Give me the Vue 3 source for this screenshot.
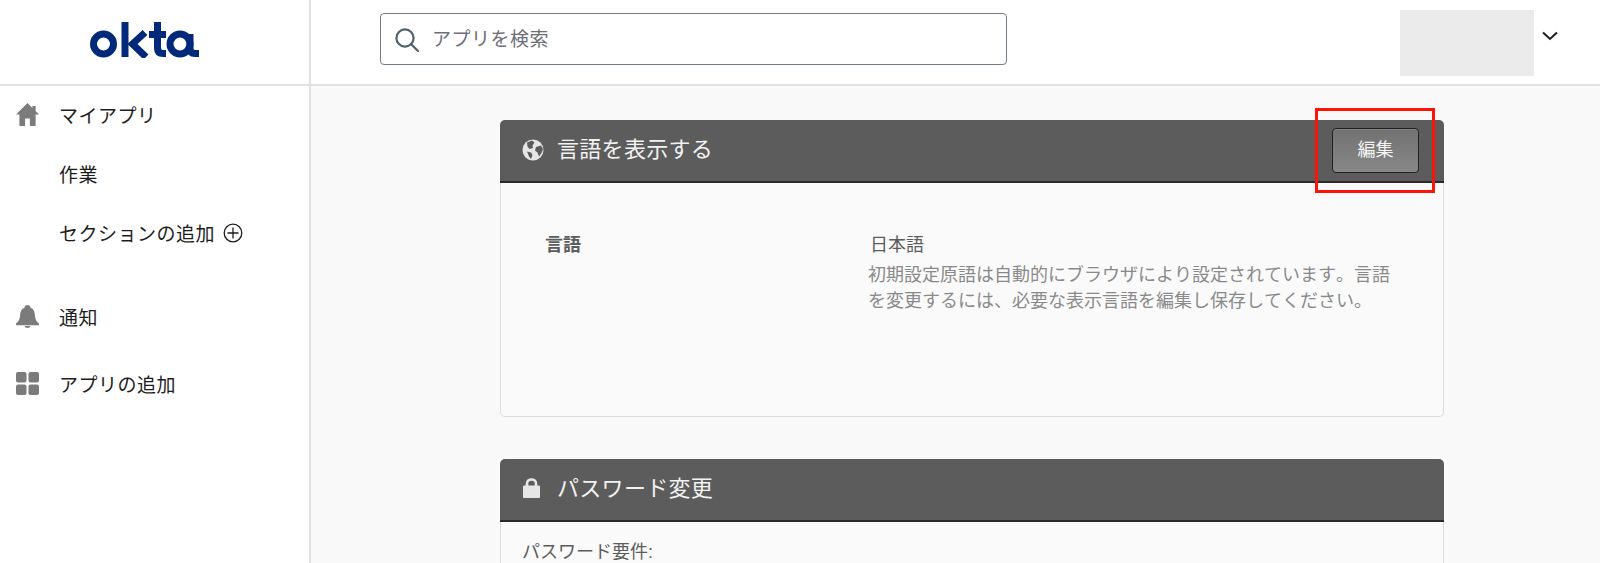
<template>
  <div class="page">
    <header class="topbar">
      <div class="brand">
        <svg class="logo" width="109" height="36" viewBox="0 0 109 36" fill="none" stroke="#00297a" stroke-width="7">
          <circle cx="13.5" cy="22" r="10" />
          <path d="M35 0V35" />
          <path d="M55 10.5L42.5 22L56 35" />
          <path d="M59 12.5H76M67.5 0V26Q67.5 31.5 73 31.5H76" />
          <circle cx="90" cy="22" r="10" />
          <path d="M100 12V26Q100 31.5 105 31.5H109" />
        </svg>
      </div>
      <div class="topbar-main">
        <div class="search">
          <svg class="search-icon" width="24" height="24" viewBox="0 0 24 24" fill="none" stroke="#4d626e" stroke-width="2.2">
            <circle cx="10" cy="10" r="8.6" />
            <path d="M16.2 16.2L23 23" stroke-linecap="round" />
          </svg>
          <span class="search-text">アプリを検索</span>
        </div>
        <div class="user">
          <div class="user-box"></div>
          <svg width="16" height="10" viewBox="0 0 16 10" fill="none" stroke="#1d1d21" stroke-width="2">
            <path d="M1 1.5L8 8L15 1.5" />
          </svg>
        </div>
      </div>
    </header>

    <div class="content">
      <nav class="sidebar">
        <a class="nav-item first">
          <svg class="nav-icon" width="23" height="23" viewBox="0 0 23 23" fill="#7b7b7b">
            <path d="M11.5 0L16.4 4.9V3H19.6V8.1L23 11.5H19.6V23H13.9V15.5H9.1V23H3.4V11.5H0Z" />
          </svg>
          <span>マイアプリ</span>
        </a>
        <a class="nav-item"><span class="indent">作業</span></a>
        <a class="nav-item">
          <span class="indent">セクションの追加</span>
          <svg class="plus" width="20" height="20" viewBox="0 0 20 20" fill="none" stroke="#1d1d21" stroke-width="1.3">
            <circle cx="10" cy="10" r="8.8" />
            <path d="M10 4.5V15.5M4.5 10H15.5" />
          </svg>
        </a>
        <a class="nav-item spaced">
          <svg class="nav-icon" width="23" height="23" viewBox="0 0 23 23" fill="#7b7b7b">
            <path d="M11.5 0C13.2 0 14.3 1.2 14.6 2.7C17.4 3.8 18.6 6.2 18.8 9.4C19 13.6 20.3 16.5 23 18.6V20.2H0V18.6C2.7 16.5 4 13.6 4.2 9.4C4.4 6.2 5.6 3.8 8.4 2.7C8.7 1.2 9.8 0 11.5 0Z" />
            <path d="M8.6 21H14.4C14.2 22.3 13 23 11.5 23C10 23 8.8 22.3 8.6 21Z" />
          </svg>
          <span>通知</span>
        </a>
        <a class="nav-item apps">
          <svg class="nav-icon" width="23" height="23" viewBox="0 0 23 23" fill="#7b7b7b">
            <rect width="10.5" height="10.5" rx="2" />
            <rect x="12.5" width="10.5" height="10.5" rx="2" />
            <rect y="12.5" width="10.5" height="10.5" rx="2" />
            <rect x="12.5" y="12.5" width="10.5" height="10.5" rx="2" />
          </svg>
          <span>アプリの追加</span>
        </a>
      </nav>

      <main class="main">
        <section class="panel">
          <div class="panel-head">
            <svg class="head-icon" width="22" height="22" viewBox="0 0 22 22">
              <circle cx="11" cy="11" r="10.5" fill="#e6e6e6" />
              <path d="M5 3.5L10 1.5L12.5 3.5L10.5 6.5L11 9L7.5 10L5.5 7.5Z" fill="#5c5c5c" />
              <path d="M14 8L19 6.5L21 10L19.5 14L17 17.5L15.5 13.5L13 11.5Z" fill="#5c5c5c" />
              <path d="M5 12.5L9 13.5L10.5 16L9 20L7 17.5Z" fill="#5c5c5c" />
            </svg>
            <h2>言語を表示する</h2>
            <button class="edit-btn">編集</button>
            <span class="annotation"></span>
          </div>
          <div class="panel-body lang">
            <div class="label">言語</div>
            <div class="value">
              <div class="value-main">日本語</div>
              <p class="hint">初期設定原語は自動的にブラウザにより設定されています。言語を変更するには、必要な表示言語を編集し保存してください。</p>
            </div>
          </div>
        </section>

        <section class="panel">
          <div class="panel-head">
            <svg class="head-icon lock" width="17" height="20" viewBox="0 0 17 20">
              <path d="M4 8V5.5C4 3 6 1.5 8.5 1.5C11 1.5 13 3 13 5.5V8" fill="none" stroke="#e6e6e6" stroke-width="2.6" />
              <rect y="7.5" width="17" height="12.5" rx="1" fill="#e6e6e6" />
            </svg>
            <h2>パスワード変更</h2>
          </div>
          <div class="panel-body req">パスワード要件:</div>
        </section>
      </main>
    </div>
  </div>
</template>

<script setup>
</script>

<style>
html,
body {
  margin: 0;
  overflow: hidden;
}
</style>

<style scoped>
.page {
  height: 563px;
  overflow: hidden;
  display: flex;
  flex-direction: column;
  background: #f9f9f9;
  color: #1d1d21;
  font-family: "Liberation Sans", "Noto Sans CJK JP", sans-serif;
}

.topbar {
  flex: none;
  display: flex;
  height: 86px;
  box-sizing: border-box;
  background: #fff;
  border-bottom: 2px solid #e1e1e1;
}

.brand {
  flex: none;
  width: 311px;
  box-sizing: border-box;
  border-right: 2px solid #e1e1e1;
  padding: 22px 0 0 90px;
}

.logo {
  display: block;
}

.topbar-main {
  flex: 1;
  display: flex;
  align-items: flex-start;
  padding: 10px 0 0 69px;
}

.search {
  width: 627px;
  height: 52px;
  box-sizing: border-box;
  margin-top: 3px;
  display: flex;
  align-items: center;
  gap: 13px;
  padding-left: 14px;
  background: #fff;
  border: 1px solid #737d86;
  border-radius: 4px;
}

.search-icon {
  margin-top: 1px;
}

.search-text {
  margin-bottom: 4px;
  font-size: 19px;
  letter-spacing: 0.5px;
  color: #6e6e78;
}

.user {
  display: flex;
  align-items: center;
  gap: 8px;
  margin-left: 393px;
}

.user-box {
  width: 134px;
  height: 66px;
  background: #ebebeb;
}

.user svg {
  margin-bottom: 14px;
}

.content {
  flex: 1;
  display: flex;
  min-height: 0;
}

.sidebar {
  flex: none;
  width: 311px;
  box-sizing: border-box;
  background: #fff;
  border-right: 2px solid #e1e1e1;
}

.nav-item {
  height: 59px;
  box-sizing: border-box;
  display: flex;
  align-items: center;
  padding-left: 16px;
  font-size: 19px;
  letter-spacing: 0.5px;
  color: #1d1d21;
}

.first {
  margin-top: -1px;
}

.nav-icon {
  flex: none;
  margin-right: 20px;
}

.indent {
  margin-left: 43px;
}

.plus {
  margin-left: 8px;
}

.spaced {
  margin-top: 25px;
}

.apps {
  margin-top: 8px;
}

.main {
  flex: 1;
  padding: 34px 156px 0 189px;
}

.panel {
  margin-bottom: 42px;
}

.panel-head {
  position: relative;
  height: 63px;
  box-sizing: border-box;
  display: flex;
  align-items: center;
  padding: 0 22px;
  background: #5c5c5c;
  border-bottom: 2px solid #2b2b2b;
  border-radius: 5px 5px 0 0;
}

.head-icon {
  flex: none;
  margin: 0 13px 2px 0;
}

.lock {
  margin: 0 17px 4px 1px;
}

.panel-head h2 {
  margin: 0 0 8px;
  font-size: 22px;
  font-weight: 400;
  letter-spacing: 0.3px;
  color: #f2f2f2;
}

.edit-btn {
  width: 87px;
  height: 45px;
  margin-left: auto;
  margin-right: 3px;
  padding: 0 0 6px;
  font: inherit;
  font-size: 18px;
  color: #f5f5f5;
  background: linear-gradient(#727272, #878787);
  border: 1px solid #222;
  border-radius: 4px;
  box-shadow: inset 0 1px 0 rgba(255, 255, 255, 0.12);
}

.annotation {
  position: absolute;
  top: -12px;
  right: 9px;
  width: 120px;
  height: 85px;
  box-sizing: border-box;
  border: 3px solid #fb1407;
  pointer-events: none;
}

.panel-body {
  box-sizing: border-box;
  background: #fafafa;
  border: 1px solid #dcdcdc;
  border-top: 0;
}

.lang {
  height: 234px;
  display: flex;
  border-radius: 0 0 5px 5px;
  padding: 50px 0 0 44px;
}

.label {
  width: 323px;
  font-size: 18px;
  font-weight: 700;
  color: #5c5c5c;
  line-height: 24px;
}

.value-main {
  margin-left: 2px;
  font-size: 18px;
  line-height: 24px;
  color: #5c5c5c;
}

.hint {
  width: 530px;
  margin: 5px 0 0;
  font-size: 18px;
  line-height: 26px;
  color: #8a8a8a;
  font-kerning: none;
  text-spacing-trim: space-all;
}

.req {
  padding: 18px 21px;
  height: 60px;
  font-size: 18px;
  line-height: 24px;
  color: #5c5c5c;
}
</style>
